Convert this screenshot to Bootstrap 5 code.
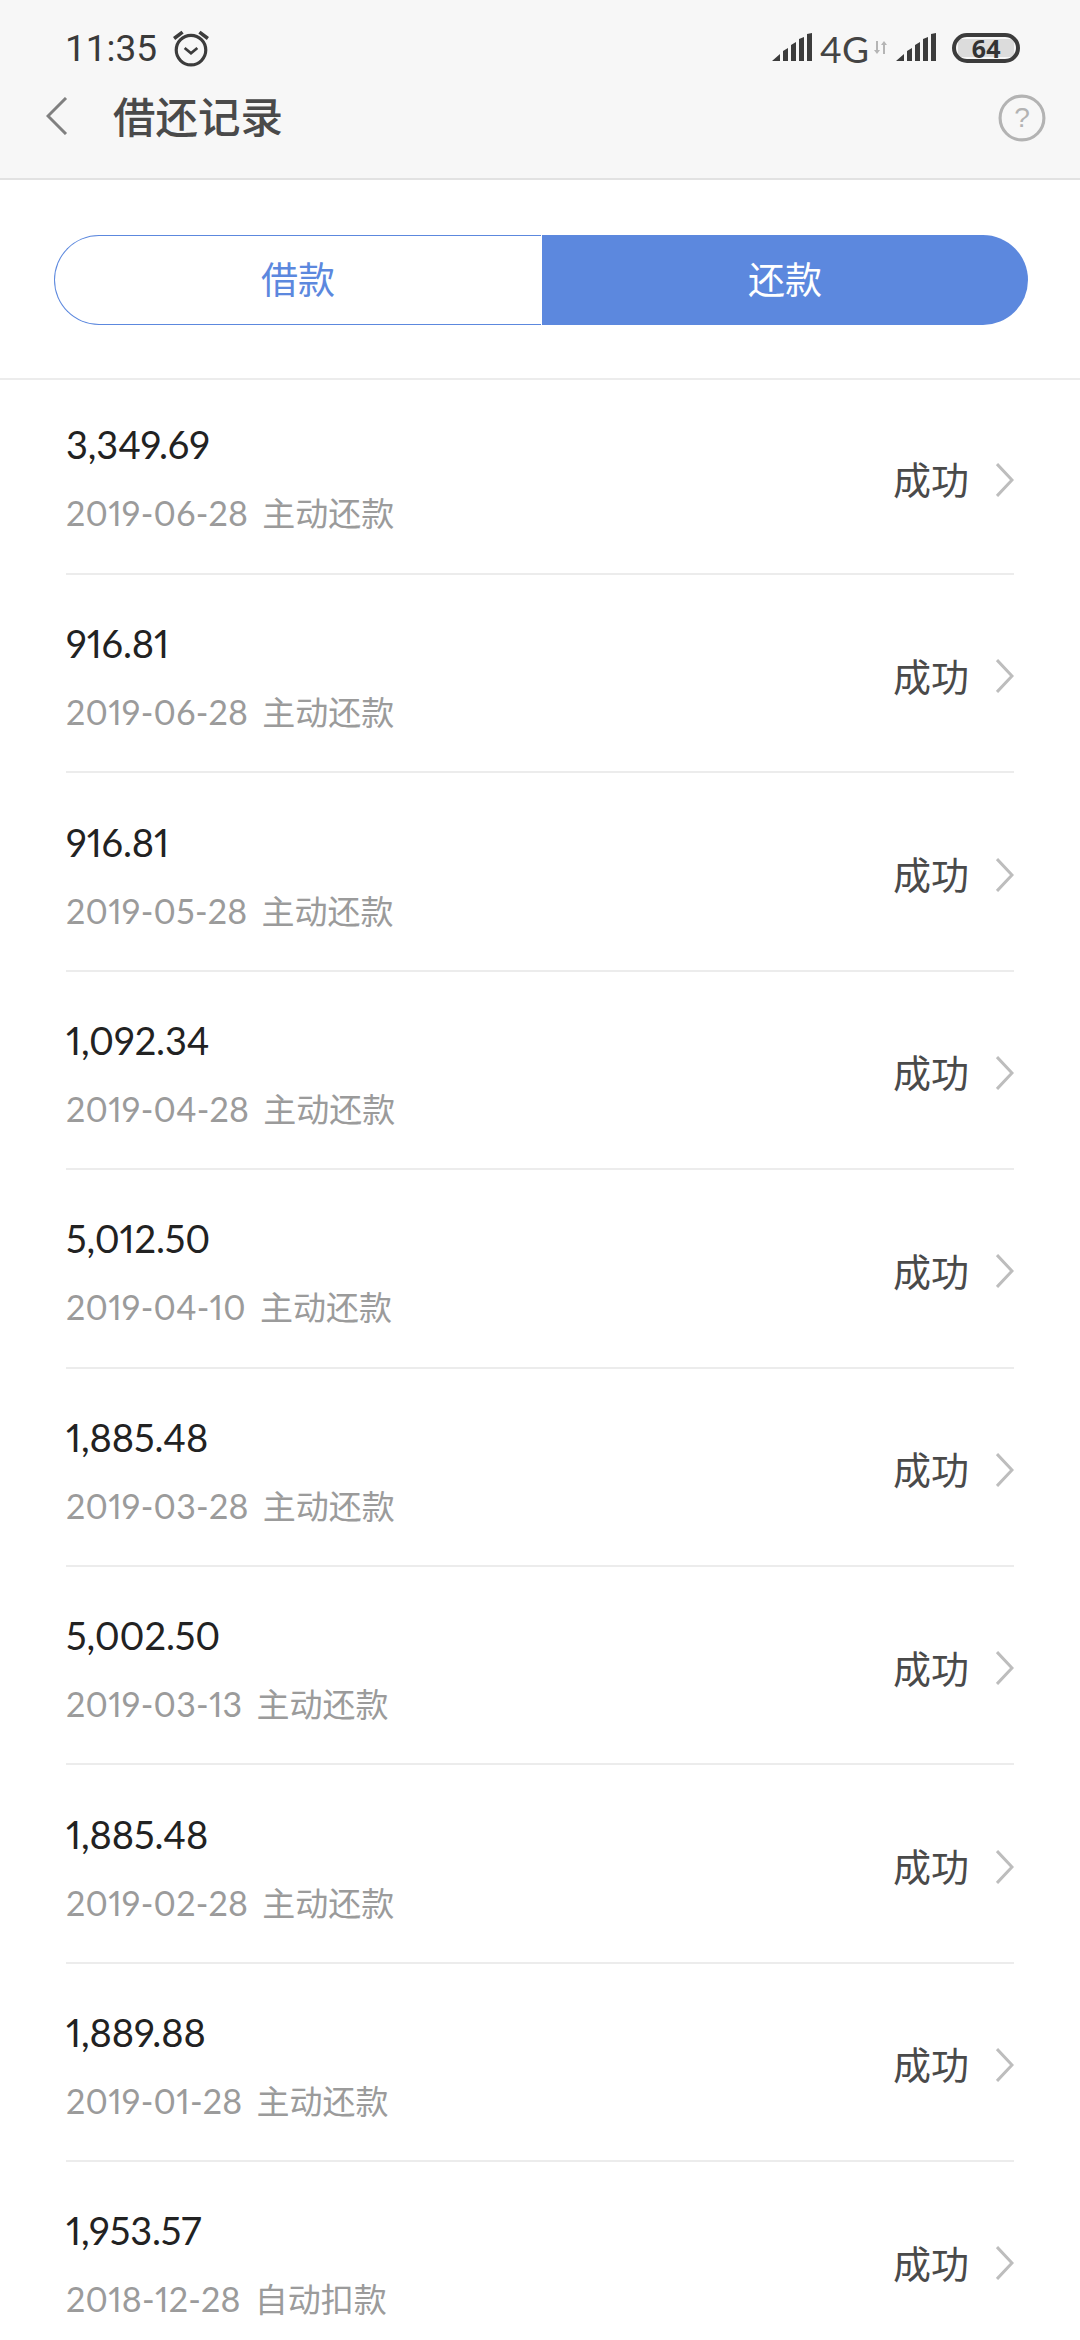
<!DOCTYPE html>
<html lang="zh">
<head>
    <meta charset="UTF-8" />
    <title>借还记录</title>
    <link href="https://cdn.jsdelivr.net/npm/bootstrap@5.3.2/dist/css/bootstrap.min.css" rel="stylesheet" />
    <style>
        html, body {
            height: 2340px;
            overflow: hidden;
        }

        body {
            width: 1080px;
            background-color: #fff;
            font-family: "Lato", "Noto Sans CJK SC", sans-serif;
            font-variant-numeric: proportional-nums;
        }

        .top-head {
            height: 180px;
            background-color: #f7f7f7;
            border-bottom: 2px solid #e2e2e2;
        }

        .status-line {
            height: 80px;
            padding: 16px 60px 0 65px;
        }

        .clock-text {
            font-family: "Roboto", sans-serif;
            font-variant-numeric: tabular-nums;
            font-weight: 400;
            font-size: 37px;
            line-height: 1;
            color: #3a3a3a;
            margin-right: 15px;
        }

        .net-text {
            font-family: "Lato", sans-serif;
            font-weight: 400;
            font-size: 37px;
            line-height: 1;
            color: #444;
            margin: 0 5px 0 8px;
        }

        .batt-box {
            width: 68px;
            height: 30px;
            border: 4px solid #3c3c3c;
            border-radius: 15px;
            margin-left: 16px;
            font-family: "Noto Sans", sans-serif;
            font-size: 25px;
            font-weight: 700;
            line-height: 22px;
            text-align: center;
            color: #333;
            background: linear-gradient(#dcdcdc, #dcdcdc) no-repeat 2px 2px / 56px 18px;
        }

        .title-line {
            height: 76px;
            padding: 0 34px 0 46px;
        }

        .page-title {
            font-family: "Noto Sans CJK SC", sans-serif;
            font-size: 42.5px;
            font-weight: 500;
            color: #4a4a4a;
            margin: 0 0 6px 45px;
            line-height: 1;
        }

        .tab-wrap {
            height: 200px;
            padding: 55px 52px 55px 54px;
            border-bottom: 2px solid #ececec;
        }

        .tab-side {
            flex: 1 1 0;
            height: 90px;
            padding-bottom: 3px;
            font-family: "Noto Sans CJK SC", sans-serif;
            font-size: 37px;
            line-height: 1;
        }

        .tab-off {
            color: #5c88de;
            background-color: #fff;
            border: 1.5px solid #5c88de;
            border-right: 0;
            border-radius: 45px 0 0 45px;
            margin-right: 1px;
        }

        .tab-on {
            color: #fff;
            background-color: #5c88de;
            border-radius: 0 45px 45px 0;
        }

        .pay-list {
            padding: 0 66px;
        }

        .pay-row {
            height: 198.4px;
            border-bottom: 2px solid #ececec;
        }

        .pay-row:first-child {
            height: 195px;
        }

        .pay-row .list-left {
            margin-top: 8px;
        }

        .pay-row:first-child .list-left {
            margin-top: 3px;
        }

        .pay-amt {
            font-size: 38px;
            line-height: 46px;
            letter-spacing: -0.1px;
            color: #222;
            margin-bottom: 23px;
        }

        .pay-sub {
            font-size: 34px;
            line-height: 44px;
            color: #9b9b9b;
            font-weight: 400;
            white-space: nowrap;
            letter-spacing: 0.25px;
        }

        .pay-sub span {
            font-family: "Noto Sans CJK SC", sans-serif;
            font-size: 33px;
            font-weight: 400;
            letter-spacing: 0;
            margin-left: 14px;
        }

        .pay-state {
            font-family: "Noto Sans CJK SC", sans-serif;
            font-size: 38px;
            color: #4a4a4a;
            line-height: 1;
            margin: 3px 27px 0 0;
        }

        .row-arrow {
            margin-top: 6px;
        }
    </style>
</head>

<body>
    <div class="top-head">
        <div class="status-line d-flex align-items-center">
            <span class="clock-text">11:35</span>
            <svg width="38" height="38" viewBox="0 0 36 36" fill="none" stroke="#3c3c3c" stroke-width="3">
                <circle cx="18" cy="20" r="14"/>
                <path d="M12 18l6 5 6-5" stroke-width="2.6"/>
                <path d="M2 9l8-6M34 9l-8-6" stroke-width="3.4"/>
            </svg>
            <div class="ms-auto d-flex align-items-center">
                <svg width="40" height="30" viewBox="0 0 40 30" fill="#3c3c3c"><path d="M0 28l8-7v7zM11 28V18l5-3v13zM19 28V12l5-3v19zM27 28V6l5-2v24zM35 28V1l5-1v28z"/></svg>
                <span class="net-text">4G</span>
                <svg width="14" height="14" viewBox="0 0 14 14" fill="#b5b5b5"><path d="M2 0h2v9h2l-3 4-3-4h2zM9 13h2V4h2l-3-4-3 4h2z"/></svg>
                <svg class="ms-2" width="40" height="30" viewBox="0 0 40 30" fill="#3c3c3c"><path d="M0 28l8-7v7zM11 28V18l5-3v13zM19 28V12l5-3v19zM27 28V6l5-2v24zM35 28V1l5-1v28z"/></svg>
                <div class="batt-box">64</div>
            </div>
        </div>
        <div class="title-line d-flex align-items-center">
            <svg class="mb-1" width="22" height="38" viewBox="0 0 22 38" fill="none" stroke="#808080" stroke-width="3"><path d="M20 1L2 19l18 18"/></svg>
            <h1 class="page-title">借还记录</h1>
            <svg class="ms-auto" width="48" height="48" viewBox="0 0 46 46" fill="none" stroke="#b3b3b3" stroke-width="3">
                <circle cx="23" cy="23" r="21"/>
                <text x="23" y="32" text-anchor="middle" font-family="Liberation Sans, sans-serif" font-size="27" fill="#b3b3b3" stroke="none">?</text>
            </svg>
        </div>
    </div>

    <div class="tab-wrap d-flex">
        <div class="tab-side tab-off d-flex align-items-center justify-content-center">借款</div>
        <div class="tab-side tab-on d-flex align-items-center justify-content-center">还款</div>
    </div>

    <div class="pay-list" id="payList"></div>

    <script>
        const rows = [
            ["3,349.69", "2019-06-28", "主动还款"],
            ["916.81", "2019-06-28", "主动还款"],
            ["916.81", "2019-05-28", "主动还款"],
            ["1,092.34", "2019-04-28", "主动还款"],
            ["5,012.50", "2019-04-10", "主动还款"],
            ["1,885.48", "2019-03-28", "主动还款"],
            ["5,002.50", "2019-03-13", "主动还款"],
            ["1,885.48", "2019-02-28", "主动还款"],
            ["1,889.88", "2019-01-28", "主动还款"],
            ["1,953.57", "2018-12-28", "自动扣款"]
        ];

        document.getElementById("payList").innerHTML = rows.map(r => `
            <div class="pay-row d-flex align-items-center">
                <div class="list-left">
                    <div class="pay-amt">${r[0]}</div>
                    <div class="pay-sub">${r[1]}<span>${r[2]}</span></div>
                </div>
                <div class="pay-state ms-auto">成功</div>
                <svg class="row-arrow" width="18" height="34" viewBox="0 0 18 34" fill="none" stroke="#bdbdbd" stroke-width="3"><path d="M1 1l15 16L1 33"/></svg>
            </div>`).join("");
    </script>
    <script src="https://cdn.jsdelivr.net/npm/bootstrap@5.3.2/dist/js/bootstrap.bundle.min.js"></script>
</body>

</html>
